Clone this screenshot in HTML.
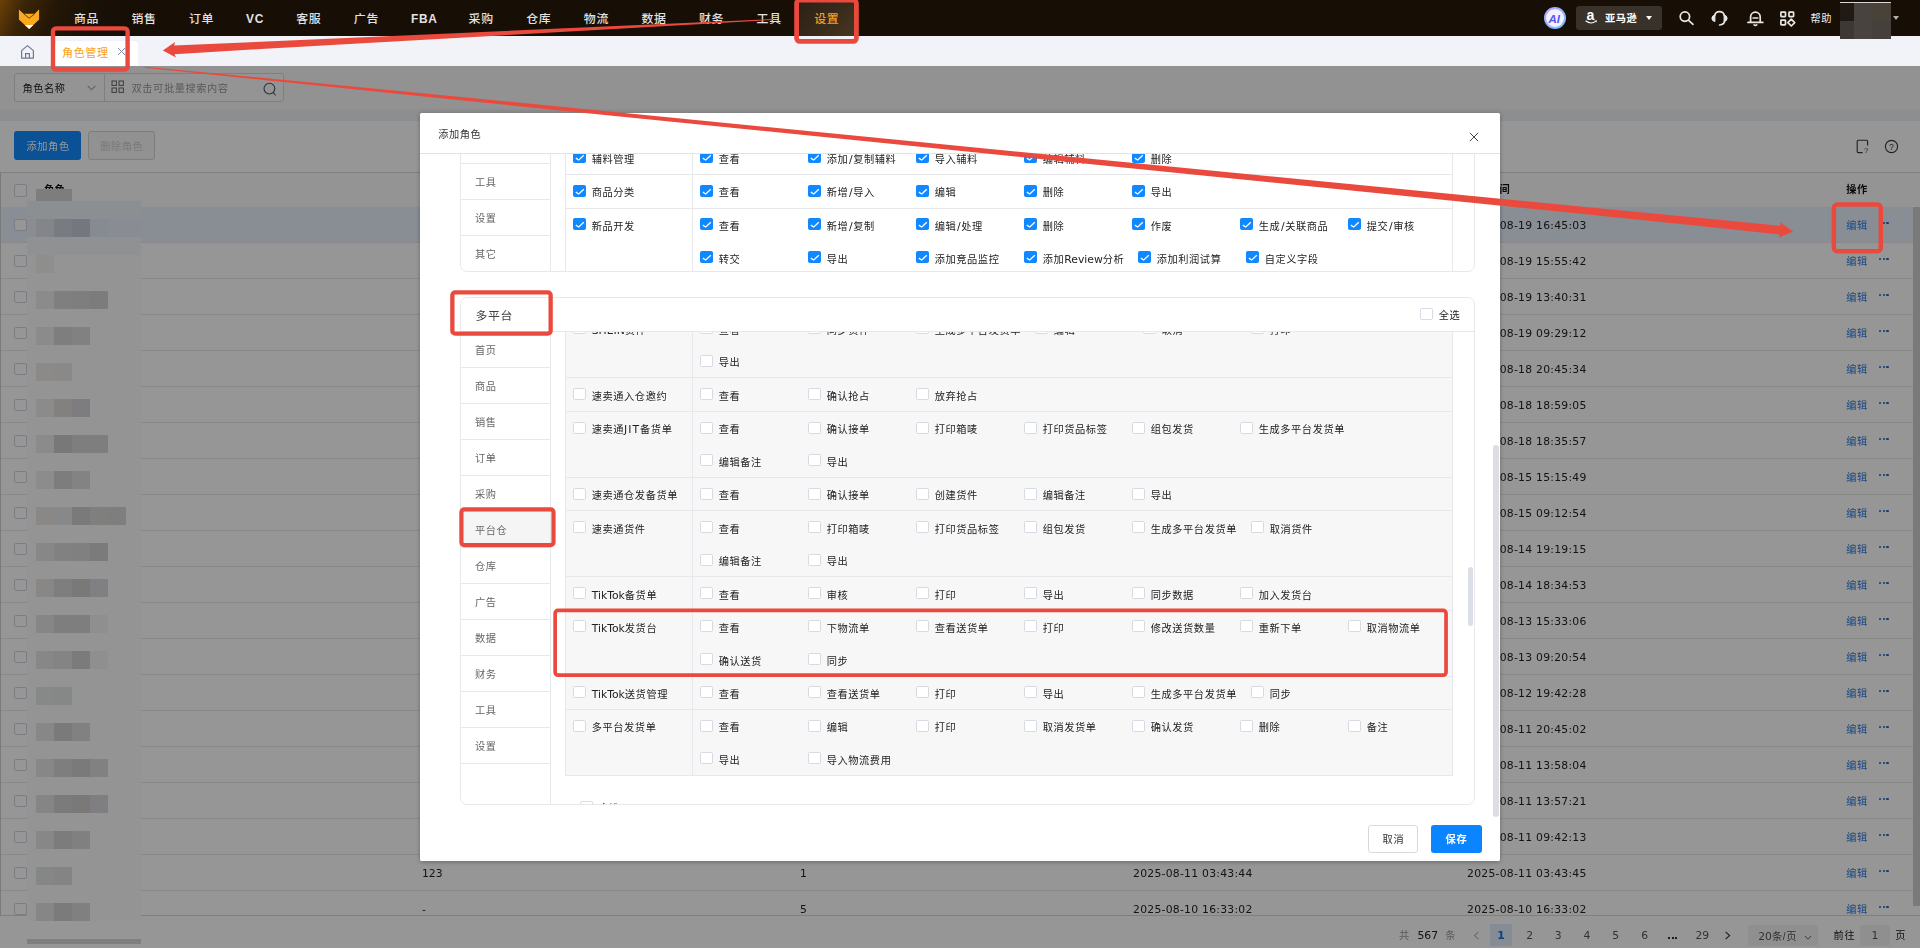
<!DOCTYPE html><html lang="zh-CN"><head><meta charset="utf-8"><title>角色管理</title><style>
*{box-sizing:border-box;margin:0;padding:0}
html,body{width:1920px;height:948px;overflow:hidden;background:#fff}
body{font-family:"Liberation Sans","Noto Sans CJK SC",sans-serif;font-size:10.8px;color:#333;position:relative}
.t{position:absolute;white-space:nowrap}
#dlg,#page,#navw{will-change:transform}
.v{font-family:"DejaVu Sans","Liberation Sans","Noto Sans CJK SC",sans-serif}
#dlg .v{font-weight:400}
.t .v{font-size:1.0582em;letter-spacing:0}
.t .sl{font-size:1.0582em;letter-spacing:0}
.tm{letter-spacing:.26px}
.abs{position:absolute}
.sl{font-family:"DejaVu Sans","Liberation Sans",sans-serif;display:inline-block;width:4.9px;text-align:center}
.cb{position:absolute;width:12.6px;height:12.4px;border:1px solid #d6dae3;border-radius:1.6px;background:#fff}
.cb.on{background:#1088ff;border-color:#1088ff}
.cb.on:after{content:"";position:absolute;left:-1px;top:-1px;width:13px;height:13px;background:#fff;clip-path:polygon(3.22px 6.54px,5.63px 8.14px,10.34px 3.71px,11.26px 4.69px,5.77px 9.86px,2.48px 7.66px)}
.gcb{position:absolute;width:12.4px;height:12.4px;border:1px solid #d2d5e2;border-radius:2px;background:#fff}
#page{position:absolute;left:0;top:66px;width:1920px;height:882px;background:#fff;overflow:hidden}
#mask{position:absolute;left:0;top:66px;width:1920px;height:882px;background:rgba(0,0,0,.412)}
#dlg{position:absolute;left:420px;top:113px;width:1080px;height:747.6px;border-radius:2px;background:#fff;box-shadow:0 1px 4px rgba(0,0,0,.3);overflow:hidden}
</style></head><body>
<div class="abs" style="left:0;top:0;width:1920px;height:36px;background:#170f06"></div>
<div class="abs" style="left:0;top:0;width:300px;height:36px;background:linear-gradient(112deg,rgba(150,90,8,.66) 0px,rgba(105,64,8,.44) 24px,rgba(72,44,8,.26) 55px,rgba(40,26,8,.12) 90px,rgba(23,15,6,0) 125px)"></div>
<div class="abs" style="left:797px;top:0;width:60px;height:36px;background:linear-gradient(135deg,#2a2015 0%,#3a2c1c 60%,#4a3720 100%)"></div>
<svg class="abs" style="left:17px;top:7px" width="24" height="24" viewBox="17 7 24 24"><path d="M18.9 9.6 L23.6 13.8 L34.8 13.8 L39.1 9.2 L39.1 19.6 L29.1 28.9 L18.9 19.6 Z" fill="#fba91f"/><path d="M23.8 13.9 L29.2 18.2 L34.6 13.9" fill="none" stroke="#3a2406" stroke-width="0.8"/><path d="M24.9 25 L33.4 25 L29.1 28.9 Z" fill="#fff"/></svg>
<span class="t" style="left:74px;top:10.10px;line-height:18px;font-size:11.91px;letter-spacing:0.69px;color:#e2e2e2;font-weight:500;">商品</span>
<span class="t" style="left:131.5px;top:10.10px;line-height:18px;font-size:11.91px;letter-spacing:0.69px;color:#e2e2e2;font-weight:500;">销售</span>
<span class="t" style="left:189px;top:10.10px;line-height:18px;font-size:11.91px;letter-spacing:0.69px;color:#e2e2e2;font-weight:500;">订单</span>
<span class="t" style="left:246px;top:10.10px;line-height:18px;font-size:11.91px;letter-spacing:0.69px;color:#e2e2e2;font-weight:700;">VC</span>
<span class="t" style="left:296.2px;top:10.10px;line-height:18px;font-size:11.91px;letter-spacing:0.69px;color:#e2e2e2;font-weight:500;">客服</span>
<span class="t" style="left:353.8px;top:10.10px;line-height:18px;font-size:11.91px;letter-spacing:0.69px;color:#e2e2e2;font-weight:500;">广告</span>
<span class="t" style="left:411px;top:10.10px;line-height:18px;font-size:11.91px;letter-spacing:0.69px;color:#e2e2e2;font-weight:700;">FBA</span>
<span class="t" style="left:468.6px;top:10.10px;line-height:18px;font-size:11.91px;letter-spacing:0.69px;color:#e2e2e2;font-weight:500;">采购</span>
<span class="t" style="left:526.2px;top:10.10px;line-height:18px;font-size:11.91px;letter-spacing:0.69px;color:#e2e2e2;font-weight:500;">仓库</span>
<span class="t" style="left:583.8px;top:10.10px;line-height:18px;font-size:11.91px;letter-spacing:0.69px;color:#e2e2e2;font-weight:500;">物流</span>
<span class="t" style="left:641.4px;top:10.10px;line-height:18px;font-size:11.91px;letter-spacing:0.69px;color:#e2e2e2;font-weight:500;">数据</span>
<span class="t" style="left:699px;top:10.10px;line-height:18px;font-size:11.91px;letter-spacing:0.69px;color:#e2e2e2;font-weight:500;">财务</span>
<span class="t" style="left:756.6px;top:10.10px;line-height:18px;font-size:11.91px;letter-spacing:0.69px;color:#e2e2e2;font-weight:500;">工具</span>
<span class="t" style="left:814.2px;top:10.10px;line-height:18px;font-size:11.91px;letter-spacing:0.69px;color:#f9a11b;font-weight:500;">设置</span>
<div class="abs" style="left:1544px;top:7px;width:22px;height:22px;border-radius:50%;background:linear-gradient(135deg,#b9a3ff,#6fc3ff);"></div>
<div class="abs" style="left:1546px;top:9px;width:18px;height:18px;border-radius:50%;background:#f4f1ff"></div>
<span class="t" style="left:1548.6px;top:11.90px;line-height:14px;font-size:11.53px;letter-spacing:0.67px;color:#5b55f0;font-weight:700;font-style:italic;letter-spacing:-0.2px">AI</span>
<div class="abs" style="left:1576px;top:6px;width:86px;height:24px;border-radius:3px;background:#39322b"></div>
<span class="t" style="left:1586.6px;top:8.20px;line-height:14px;font-size:14.17px;letter-spacing:0.83px;color:#fff;font-weight:700;">a</span>
<svg class="abs" style="left:1584.5px;top:19.6px" width="13" height="5" viewBox="0 0 13 5"><path d="M0.6 0.8 Q6 4.8 10.6 1.4" fill="none" stroke="#fff" stroke-width="1.1"/><path d="M12 0.3 L9.4 0.7 L11.4 2.6Z" fill="#fff"/></svg>
<span class="t" style="left:1605px;top:11.10px;line-height:16px;font-size:10.21px;letter-spacing:0.59px;color:#fff;font-weight:700;">亚马逊</span>
<div class="abs" style="left:1645.5px;top:16px;border:3.6px solid transparent;border-top:4.5px solid #fff;border-bottom:none"></div>
<svg class="abs" style="left:0;top:0" width="1920" height="40" viewBox="0 0 1920 40"><g fill="none" stroke="#e9e7e4" stroke-width="1.7" stroke-linecap="round" stroke-linejoin="round"><circle cx="1684.9" cy="16.6" r="4.7"/><path d="M1688.6 20.4 L1693 24.3"/><path d="M1714.6 15.6 A5 5 0 0 1 1724.4 15.6"/><path d="M1724.6 21.2 Q1724.2 24.6 1719.6 25"/><path d="M1714.9 15 L1714.9 21.6 Q1711.9 21 1711.9 18.3 Q1711.9 15.6 1714.9 15Z" fill="#e9e7e4" stroke-width="1"/><path d="M1724.1 15 L1724.1 21.6 Q1727.1 21 1727.1 18.3 Q1727.1 15.6 1724.1 15Z" fill="#e9e7e4" stroke-width="1"/><path d="M1750.6 22 L1750.6 17 A4.8 4.8 0 0 1 1760.2 17 L1760.2 22"/><path d="M1748 22.4 L1762.8 22.4"/><path d="M1753 17.9 L1757.8 17.9" stroke-width="1.5"/><path d="M1754 24.9 Q1755.4 25.9 1756.8 24.9" stroke-width="1.6"/><rect x="1780.9" y="12.1" width="4.6" height="4.6" rx="0.6"/><rect x="1789" y="12.1" width="4.6" height="4.6" rx="0.6"/><rect x="1780.9" y="20.2" width="4.6" height="4.6" rx="0.6"/><path d="M1791.3 19.2 L1794.7 22.6 L1791.3 26 L1787.9 22.6Z"/></g></svg>
<span class="t" style="left:1810.5px;top:11.10px;line-height:16px;font-size:10.21px;letter-spacing:0.59px;color:#f0f0f0;">帮助</span>
<div class="abs" style="left:0;top:36px;width:1920px;height:30px;background:#f2f3f8"></div>
<svg class="abs" style="left:20px;top:44px" width="15" height="16" viewBox="0 0 15 16"><path d="M1.6 6.6 L7.5 1.6 L13.4 6.6 L13.4 14.2 L1.6 14.2 Z" fill="none" stroke="#6d7a94" stroke-width="1.2" stroke-linejoin="round"/><path d="M5.6 14 L5.6 9.6 L9.4 9.6 L9.4 14" fill="none" stroke="#6d7a94" stroke-width="1.2"/></svg>
<div class="abs" style="left:55px;top:41px;width:83px;height:25px;background:#fff;border-radius:4px 4px 0 0"></div>
<span class="t" style="left:62px;top:45.10px;line-height:16px;font-size:11.06px;letter-spacing:0.64px;color:#f9a11b;">角色管理</span>
<svg class="abs" style="left:116.5px;top:46.5px" width="9" height="9" viewBox="0 0 9 9"><path d="M1 1 L8 8 M8 1 L1 8" stroke="#7c8aa5" stroke-width="1"/></svg>
<div id="page">
<div style="position:absolute;left:0px;top:0px;width:1920px;height:44px;background:#f9f9f9"></div>
<div style="position:absolute;left:14px;top:7px;width:90.5px;height:28.5px;border:1px solid #d9d9d9;border-radius:3px 0 0 3px;background:#fbfbfb"></div>
<div style="position:absolute;left:103.5px;top:7px;width:180px;height:28.5px;border:1px solid #d9d9d9;border-radius:0 3px 3px 0;background:#fbfbfb"></div>
<span class="t" style="left:22.4px;top:14.90px;line-height:16px;font-size:10.21px;letter-spacing:0.59px;color:#222;">角色名称</span>
<svg class="abs" style="left:86.5px;top:18.5px" width="9" height="6" viewBox="0 0 9 6"><path d="M0.8 1 L4.5 4.8 L8.2 1" fill="none" stroke="#a8a8a8" stroke-width="1.1"/></svg>
<svg class="abs" style="left:111px;top:14px" width="14" height="14" viewBox="0 0 14 14"><g fill="none" stroke="#666" stroke-width="1"><rect x="1" y="1" width="4.4" height="4.4"/><rect x="8" y="1" width="4.4" height="4.4"/><rect x="1" y="8" width="4.4" height="4.4"/><rect x="8" y="8" width="4.4" height="4.4"/></g></svg>
<span class="t" style="left:131.5px;top:14.90px;line-height:16px;font-size:10.21px;letter-spacing:0.59px;color:#9a9a9a;">双击可批量搜索内容</span>
<svg class="abs" style="left:262px;top:15px" width="16" height="16" viewBox="0 0 16 16"><circle cx="7.4" cy="7.6" r="5.4" fill="none" stroke="#4a5260" stroke-width="1.05"/><path d="M11.4 11.8 L13.4 14" stroke="#4a5260" stroke-width="1.05" stroke-linecap="round"/></svg>
<div style="position:absolute;left:0px;top:43.400000000000006px;width:1920px;height:11.2px;background:#eff1f4"></div>
<div style="position:absolute;left:0px;top:55px;width:1920px;height:830px;background:#fff"></div>
<div style="position:absolute;left:14px;top:65px;width:67px;height:29px;background:#118bff;border-radius:3px"></div>
<span class="t" style="left:26.5px;top:72.60px;line-height:16px;font-size:10.21px;letter-spacing:0.59px;color:#fff;">添加角色</span>
<div style="position:absolute;left:88.3px;top:65px;width:66.4px;height:29px;background:#f7f7f7;border:1px solid #d4d4d4;border-radius:3px"></div>
<span class="t" style="left:100.2px;top:72.60px;line-height:16px;font-size:10.21px;letter-spacing:0.59px;color:#cdcdcd;">删除角色</span>
<svg class="abs" style="left:1853px;top:72px" width="17" height="17" viewBox="0 0 17 17"><path d="M9.6 14.6 L5.2 14.6 Q4.2 14.6 4.2 13.6 L4.2 3.2 Q4.2 2.2 5.2 2.2 L13.6 2.2 Q14.6 2.2 14.6 3.2 L14.6 7.6" fill="none" stroke="#3a3a3a" stroke-width="1.15"/><text x="11" y="15.4" font-size="7.6" fill="#3a3a3a">?</text></svg>
<svg class="abs" style="left:1882.6px;top:72px" width="17" height="17" viewBox="0 0 17 17"><circle cx="8.5" cy="8.5" r="6.1" fill="none" stroke="#3a3a3a" stroke-width="1.15"/><text x="6.1" y="11.7" font-size="8.8" fill="#3a3a3a">?</text></svg>
<div style="position:absolute;left:0px;top:105.5px;width:1920px;height:1px;background:#dcdcdc"></div>
<div style="position:absolute;left:0px;top:106px;width:1px;height:745px;background:#d0d0d0"></div>
<div style="position:absolute;left:1px;top:106.5px;width:1919px;height:34px;background:#fbfbfb"></div>
<div class="gcb" style="position:absolute;left:14.2px;top:118.30000000000001px;width:12.4px;height:12.4px;"></div>
<span class="t" style="left:44px;top:115.90px;line-height:16px;font-size:10.21px;letter-spacing:0.59px;color:#111;font-weight:700;">角色</span>
<span class="t" style="left:421px;top:115.90px;line-height:16px;font-size:10.21px;letter-spacing:0.59px;color:#111;font-weight:700;">备注</span>
<span class="t" style="left:800px;top:115.90px;line-height:16px;font-size:10.21px;letter-spacing:0.59px;color:#111;font-weight:700;">用户数</span>
<span class="t" style="left:1133px;top:115.90px;line-height:16px;font-size:10.21px;letter-spacing:0.59px;color:#111;font-weight:700;">创建时间</span>
<span class="t" style="left:1467px;top:115.90px;line-height:16px;font-size:10.21px;letter-spacing:0.59px;color:#111;font-weight:700;">更新时间</span>
<span class="t" style="left:1846.3px;top:115.90px;line-height:16px;font-size:10.21px;letter-spacing:0.59px;color:#111;font-weight:700;">操作</span>
<div style="position:absolute;left:1px;top:140.6px;width:1912px;height:36px;background:#e8f1fc;border-bottom:1px solid #e9e9e9"></div>
<div class="gcb" style="position:absolute;left:14.2px;top:153.1px;width:12.4px;height:12.4px;"></div>
<span class="t v tm" style="left:1133px;top:152.20px;line-height:16px;font-size:10.8px;color:#222;">2025-08-19 16:45:03</span>
<span class="t v tm" style="left:1467px;top:152.20px;line-height:16px;font-size:10.8px;color:#222;">2025-08-19 16:45:03</span>
<span class="t" style="left:1846.3px;top:151.90px;line-height:16px;font-size:10.21px;letter-spacing:0.59px;color:#2f7fe0;">编辑</span>
<div style="position:absolute;left:1879.2px;top:156.1px;width:2.2px;height:2.2px;background:#1a66d0;border-radius:1.1px"></div>
<div style="position:absolute;left:1882.8px;top:156.1px;width:2.2px;height:2.2px;background:#1a66d0;border-radius:1.1px"></div>
<div style="position:absolute;left:1886.4px;top:156.1px;width:2.2px;height:2.2px;background:#1a66d0;border-radius:1.1px"></div>
<div style="position:absolute;left:1px;top:176.6px;width:1912px;height:36px;background:#fff;border-bottom:1px solid #e9e9e9"></div>
<div class="gcb" style="position:absolute;left:14.2px;top:189.1px;width:12.4px;height:12.4px;"></div>
<span class="t v tm" style="left:1133px;top:188.20px;line-height:16px;font-size:10.8px;color:#222;">2025-08-19 15:55:42</span>
<span class="t v tm" style="left:1467px;top:188.20px;line-height:16px;font-size:10.8px;color:#222;">2025-08-19 15:55:42</span>
<span class="t" style="left:1846.3px;top:187.90px;line-height:16px;font-size:10.21px;letter-spacing:0.59px;color:#2f7fe0;">编辑</span>
<div style="position:absolute;left:1879.2px;top:192.10000000000002px;width:2.2px;height:2.2px;background:#1a66d0;border-radius:1.1px"></div>
<div style="position:absolute;left:1882.8px;top:192.10000000000002px;width:2.2px;height:2.2px;background:#1a66d0;border-radius:1.1px"></div>
<div style="position:absolute;left:1886.4px;top:192.10000000000002px;width:2.2px;height:2.2px;background:#1a66d0;border-radius:1.1px"></div>
<div style="position:absolute;left:1px;top:212.60000000000002px;width:1912px;height:36px;background:#fff;border-bottom:1px solid #e9e9e9"></div>
<div class="gcb" style="position:absolute;left:14.2px;top:225.10000000000002px;width:12.4px;height:12.4px;"></div>
<span class="t v tm" style="left:1133px;top:224.20px;line-height:16px;font-size:10.8px;color:#222;">2025-08-19 13:40:31</span>
<span class="t v tm" style="left:1467px;top:224.20px;line-height:16px;font-size:10.8px;color:#222;">2025-08-19 13:40:31</span>
<span class="t" style="left:1846.3px;top:223.90px;line-height:16px;font-size:10.21px;letter-spacing:0.59px;color:#2f7fe0;">编辑</span>
<div style="position:absolute;left:1879.2px;top:228.10000000000002px;width:2.2px;height:2.2px;background:#1a66d0;border-radius:1.1px"></div>
<div style="position:absolute;left:1882.8px;top:228.10000000000002px;width:2.2px;height:2.2px;background:#1a66d0;border-radius:1.1px"></div>
<div style="position:absolute;left:1886.4px;top:228.10000000000002px;width:2.2px;height:2.2px;background:#1a66d0;border-radius:1.1px"></div>
<div style="position:absolute;left:1px;top:248.60000000000002px;width:1912px;height:36px;background:#fff;border-bottom:1px solid #e9e9e9"></div>
<div class="gcb" style="position:absolute;left:14.2px;top:261.1px;width:12.4px;height:12.4px;"></div>
<span class="t v tm" style="left:1133px;top:260.20px;line-height:16px;font-size:10.8px;color:#222;">2025-08-19 09:29:12</span>
<span class="t v tm" style="left:1467px;top:260.20px;line-height:16px;font-size:10.8px;color:#222;">2025-08-19 09:29:12</span>
<span class="t" style="left:1846.3px;top:259.90px;line-height:16px;font-size:10.21px;letter-spacing:0.59px;color:#2f7fe0;">编辑</span>
<div style="position:absolute;left:1879.2px;top:264.1px;width:2.2px;height:2.2px;background:#1a66d0;border-radius:1.1px"></div>
<div style="position:absolute;left:1882.8px;top:264.1px;width:2.2px;height:2.2px;background:#1a66d0;border-radius:1.1px"></div>
<div style="position:absolute;left:1886.4px;top:264.1px;width:2.2px;height:2.2px;background:#1a66d0;border-radius:1.1px"></div>
<div style="position:absolute;left:1px;top:284.6px;width:1912px;height:36px;background:#fff;border-bottom:1px solid #e9e9e9"></div>
<div class="gcb" style="position:absolute;left:14.2px;top:297.1px;width:12.4px;height:12.4px;"></div>
<span class="t v tm" style="left:1133px;top:296.20px;line-height:16px;font-size:10.8px;color:#222;">2025-08-18 20:45:34</span>
<span class="t v tm" style="left:1467px;top:296.20px;line-height:16px;font-size:10.8px;color:#222;">2025-08-18 20:45:34</span>
<span class="t" style="left:1846.3px;top:295.90px;line-height:16px;font-size:10.21px;letter-spacing:0.59px;color:#2f7fe0;">编辑</span>
<div style="position:absolute;left:1879.2px;top:300.1px;width:2.2px;height:2.2px;background:#1a66d0;border-radius:1.1px"></div>
<div style="position:absolute;left:1882.8px;top:300.1px;width:2.2px;height:2.2px;background:#1a66d0;border-radius:1.1px"></div>
<div style="position:absolute;left:1886.4px;top:300.1px;width:2.2px;height:2.2px;background:#1a66d0;border-radius:1.1px"></div>
<div style="position:absolute;left:1px;top:320.6px;width:1912px;height:36px;background:#fff;border-bottom:1px solid #e9e9e9"></div>
<div class="gcb" style="position:absolute;left:14.2px;top:333.1px;width:12.4px;height:12.4px;"></div>
<span class="t v tm" style="left:1133px;top:332.20px;line-height:16px;font-size:10.8px;color:#222;">2025-08-18 18:59:05</span>
<span class="t v tm" style="left:1467px;top:332.20px;line-height:16px;font-size:10.8px;color:#222;">2025-08-18 18:59:05</span>
<span class="t" style="left:1846.3px;top:331.90px;line-height:16px;font-size:10.21px;letter-spacing:0.59px;color:#2f7fe0;">编辑</span>
<div style="position:absolute;left:1879.2px;top:336.1px;width:2.2px;height:2.2px;background:#1a66d0;border-radius:1.1px"></div>
<div style="position:absolute;left:1882.8px;top:336.1px;width:2.2px;height:2.2px;background:#1a66d0;border-radius:1.1px"></div>
<div style="position:absolute;left:1886.4px;top:336.1px;width:2.2px;height:2.2px;background:#1a66d0;border-radius:1.1px"></div>
<div style="position:absolute;left:1px;top:356.6px;width:1912px;height:36px;background:#fff;border-bottom:1px solid #e9e9e9"></div>
<div class="gcb" style="position:absolute;left:14.2px;top:369.1px;width:12.4px;height:12.4px;"></div>
<span class="t v tm" style="left:1133px;top:368.20px;line-height:16px;font-size:10.8px;color:#222;">2025-08-18 18:35:57</span>
<span class="t v tm" style="left:1467px;top:368.20px;line-height:16px;font-size:10.8px;color:#222;">2025-08-18 18:35:57</span>
<span class="t" style="left:1846.3px;top:367.90px;line-height:16px;font-size:10.21px;letter-spacing:0.59px;color:#2f7fe0;">编辑</span>
<div style="position:absolute;left:1879.2px;top:372.1px;width:2.2px;height:2.2px;background:#1a66d0;border-radius:1.1px"></div>
<div style="position:absolute;left:1882.8px;top:372.1px;width:2.2px;height:2.2px;background:#1a66d0;border-radius:1.1px"></div>
<div style="position:absolute;left:1886.4px;top:372.1px;width:2.2px;height:2.2px;background:#1a66d0;border-radius:1.1px"></div>
<div style="position:absolute;left:1px;top:392.6px;width:1912px;height:36px;background:#fff;border-bottom:1px solid #e9e9e9"></div>
<div class="gcb" style="position:absolute;left:14.2px;top:405.1px;width:12.4px;height:12.4px;"></div>
<span class="t v tm" style="left:1133px;top:404.20px;line-height:16px;font-size:10.8px;color:#222;">2025-08-15 15:15:49</span>
<span class="t v tm" style="left:1467px;top:404.20px;line-height:16px;font-size:10.8px;color:#222;">2025-08-15 15:15:49</span>
<span class="t" style="left:1846.3px;top:403.90px;line-height:16px;font-size:10.21px;letter-spacing:0.59px;color:#2f7fe0;">编辑</span>
<div style="position:absolute;left:1879.2px;top:408.1px;width:2.2px;height:2.2px;background:#1a66d0;border-radius:1.1px"></div>
<div style="position:absolute;left:1882.8px;top:408.1px;width:2.2px;height:2.2px;background:#1a66d0;border-radius:1.1px"></div>
<div style="position:absolute;left:1886.4px;top:408.1px;width:2.2px;height:2.2px;background:#1a66d0;border-radius:1.1px"></div>
<div style="position:absolute;left:1px;top:428.6px;width:1912px;height:36px;background:#fff;border-bottom:1px solid #e9e9e9"></div>
<div class="gcb" style="position:absolute;left:14.2px;top:441.1px;width:12.4px;height:12.4px;"></div>
<span class="t v tm" style="left:1133px;top:440.20px;line-height:16px;font-size:10.8px;color:#222;">2025-08-15 09:12:54</span>
<span class="t v tm" style="left:1467px;top:440.20px;line-height:16px;font-size:10.8px;color:#222;">2025-08-15 09:12:54</span>
<span class="t" style="left:1846.3px;top:439.90px;line-height:16px;font-size:10.21px;letter-spacing:0.59px;color:#2f7fe0;">编辑</span>
<div style="position:absolute;left:1879.2px;top:444.1000000000001px;width:2.2px;height:2.2px;background:#1a66d0;border-radius:1.1px"></div>
<div style="position:absolute;left:1882.8px;top:444.1000000000001px;width:2.2px;height:2.2px;background:#1a66d0;border-radius:1.1px"></div>
<div style="position:absolute;left:1886.4px;top:444.1000000000001px;width:2.2px;height:2.2px;background:#1a66d0;border-radius:1.1px"></div>
<div style="position:absolute;left:1px;top:464.6px;width:1912px;height:36px;background:#fff;border-bottom:1px solid #e9e9e9"></div>
<div class="gcb" style="position:absolute;left:14.2px;top:477.1px;width:12.4px;height:12.4px;"></div>
<span class="t v tm" style="left:1133px;top:476.20px;line-height:16px;font-size:10.8px;color:#222;">2025-08-14 19:19:15</span>
<span class="t v tm" style="left:1467px;top:476.20px;line-height:16px;font-size:10.8px;color:#222;">2025-08-14 19:19:15</span>
<span class="t" style="left:1846.3px;top:475.90px;line-height:16px;font-size:10.21px;letter-spacing:0.59px;color:#2f7fe0;">编辑</span>
<div style="position:absolute;left:1879.2px;top:480.1px;width:2.2px;height:2.2px;background:#1a66d0;border-radius:1.1px"></div>
<div style="position:absolute;left:1882.8px;top:480.1px;width:2.2px;height:2.2px;background:#1a66d0;border-radius:1.1px"></div>
<div style="position:absolute;left:1886.4px;top:480.1px;width:2.2px;height:2.2px;background:#1a66d0;border-radius:1.1px"></div>
<div style="position:absolute;left:1px;top:500.6px;width:1912px;height:36px;background:#fff;border-bottom:1px solid #e9e9e9"></div>
<div class="gcb" style="position:absolute;left:14.2px;top:513.1px;width:12.4px;height:12.4px;"></div>
<span class="t v tm" style="left:1133px;top:512.20px;line-height:16px;font-size:10.8px;color:#222;">2025-08-14 18:34:53</span>
<span class="t v tm" style="left:1467px;top:512.20px;line-height:16px;font-size:10.8px;color:#222;">2025-08-14 18:34:53</span>
<span class="t" style="left:1846.3px;top:511.90px;line-height:16px;font-size:10.21px;letter-spacing:0.59px;color:#2f7fe0;">编辑</span>
<div style="position:absolute;left:1879.2px;top:516.1px;width:2.2px;height:2.2px;background:#1a66d0;border-radius:1.1px"></div>
<div style="position:absolute;left:1882.8px;top:516.1px;width:2.2px;height:2.2px;background:#1a66d0;border-radius:1.1px"></div>
<div style="position:absolute;left:1886.4px;top:516.1px;width:2.2px;height:2.2px;background:#1a66d0;border-radius:1.1px"></div>
<div style="position:absolute;left:1px;top:536.6px;width:1912px;height:36px;background:#fff;border-bottom:1px solid #e9e9e9"></div>
<div class="gcb" style="position:absolute;left:14.2px;top:549.1px;width:12.4px;height:12.4px;"></div>
<span class="t v tm" style="left:1133px;top:548.20px;line-height:16px;font-size:10.8px;color:#222;">2025-08-13 15:33:06</span>
<span class="t v tm" style="left:1467px;top:548.20px;line-height:16px;font-size:10.8px;color:#222;">2025-08-13 15:33:06</span>
<span class="t" style="left:1846.3px;top:547.90px;line-height:16px;font-size:10.21px;letter-spacing:0.59px;color:#2f7fe0;">编辑</span>
<div style="position:absolute;left:1879.2px;top:552.1px;width:2.2px;height:2.2px;background:#1a66d0;border-radius:1.1px"></div>
<div style="position:absolute;left:1882.8px;top:552.1px;width:2.2px;height:2.2px;background:#1a66d0;border-radius:1.1px"></div>
<div style="position:absolute;left:1886.4px;top:552.1px;width:2.2px;height:2.2px;background:#1a66d0;border-radius:1.1px"></div>
<div style="position:absolute;left:1px;top:572.6px;width:1912px;height:36px;background:#fff;border-bottom:1px solid #e9e9e9"></div>
<div class="gcb" style="position:absolute;left:14.2px;top:585.1px;width:12.4px;height:12.4px;"></div>
<span class="t v tm" style="left:1133px;top:584.20px;line-height:16px;font-size:10.8px;color:#222;">2025-08-13 09:20:54</span>
<span class="t v tm" style="left:1467px;top:584.20px;line-height:16px;font-size:10.8px;color:#222;">2025-08-13 09:20:54</span>
<span class="t" style="left:1846.3px;top:583.90px;line-height:16px;font-size:10.21px;letter-spacing:0.59px;color:#2f7fe0;">编辑</span>
<div style="position:absolute;left:1879.2px;top:588.1px;width:2.2px;height:2.2px;background:#1a66d0;border-radius:1.1px"></div>
<div style="position:absolute;left:1882.8px;top:588.1px;width:2.2px;height:2.2px;background:#1a66d0;border-radius:1.1px"></div>
<div style="position:absolute;left:1886.4px;top:588.1px;width:2.2px;height:2.2px;background:#1a66d0;border-radius:1.1px"></div>
<div style="position:absolute;left:1px;top:608.6px;width:1912px;height:36px;background:#fff;border-bottom:1px solid #e9e9e9"></div>
<div class="gcb" style="position:absolute;left:14.2px;top:621.1px;width:12.4px;height:12.4px;"></div>
<span class="t v tm" style="left:1133px;top:620.20px;line-height:16px;font-size:10.8px;color:#222;">2025-08-12 19:42:28</span>
<span class="t v tm" style="left:1467px;top:620.20px;line-height:16px;font-size:10.8px;color:#222;">2025-08-12 19:42:28</span>
<span class="t" style="left:1846.3px;top:619.90px;line-height:16px;font-size:10.21px;letter-spacing:0.59px;color:#2f7fe0;">编辑</span>
<div style="position:absolute;left:1879.2px;top:624.1px;width:2.2px;height:2.2px;background:#1a66d0;border-radius:1.1px"></div>
<div style="position:absolute;left:1882.8px;top:624.1px;width:2.2px;height:2.2px;background:#1a66d0;border-radius:1.1px"></div>
<div style="position:absolute;left:1886.4px;top:624.1px;width:2.2px;height:2.2px;background:#1a66d0;border-radius:1.1px"></div>
<div style="position:absolute;left:1px;top:644.6px;width:1912px;height:36px;background:#fff;border-bottom:1px solid #e9e9e9"></div>
<div class="gcb" style="position:absolute;left:14.2px;top:657.1px;width:12.4px;height:12.4px;"></div>
<span class="t v tm" style="left:1133px;top:656.20px;line-height:16px;font-size:10.8px;color:#222;">2025-08-11 20:45:02</span>
<span class="t v tm" style="left:1467px;top:656.20px;line-height:16px;font-size:10.8px;color:#222;">2025-08-11 20:45:02</span>
<span class="t" style="left:1846.3px;top:655.90px;line-height:16px;font-size:10.21px;letter-spacing:0.59px;color:#2f7fe0;">编辑</span>
<div style="position:absolute;left:1879.2px;top:660.1px;width:2.2px;height:2.2px;background:#1a66d0;border-radius:1.1px"></div>
<div style="position:absolute;left:1882.8px;top:660.1px;width:2.2px;height:2.2px;background:#1a66d0;border-radius:1.1px"></div>
<div style="position:absolute;left:1886.4px;top:660.1px;width:2.2px;height:2.2px;background:#1a66d0;border-radius:1.1px"></div>
<div style="position:absolute;left:1px;top:680.6px;width:1912px;height:36px;background:#fff;border-bottom:1px solid #e9e9e9"></div>
<div class="gcb" style="position:absolute;left:14.2px;top:693.1px;width:12.4px;height:12.4px;"></div>
<span class="t v tm" style="left:1133px;top:692.20px;line-height:16px;font-size:10.8px;color:#222;">2025-08-11 13:58:04</span>
<span class="t v tm" style="left:1467px;top:692.20px;line-height:16px;font-size:10.8px;color:#222;">2025-08-11 13:58:04</span>
<span class="t" style="left:1846.3px;top:691.90px;line-height:16px;font-size:10.21px;letter-spacing:0.59px;color:#2f7fe0;">编辑</span>
<div style="position:absolute;left:1879.2px;top:696.1px;width:2.2px;height:2.2px;background:#1a66d0;border-radius:1.1px"></div>
<div style="position:absolute;left:1882.8px;top:696.1px;width:2.2px;height:2.2px;background:#1a66d0;border-radius:1.1px"></div>
<div style="position:absolute;left:1886.4px;top:696.1px;width:2.2px;height:2.2px;background:#1a66d0;border-radius:1.1px"></div>
<div style="position:absolute;left:1px;top:716.6px;width:1912px;height:36px;background:#fff;border-bottom:1px solid #e9e9e9"></div>
<div class="gcb" style="position:absolute;left:14.2px;top:729.1px;width:12.4px;height:12.4px;"></div>
<span class="t v tm" style="left:1133px;top:728.20px;line-height:16px;font-size:10.8px;color:#222;">2025-08-11 13:57:21</span>
<span class="t v tm" style="left:1467px;top:728.20px;line-height:16px;font-size:10.8px;color:#222;">2025-08-11 13:57:21</span>
<span class="t" style="left:1846.3px;top:727.90px;line-height:16px;font-size:10.21px;letter-spacing:0.59px;color:#2f7fe0;">编辑</span>
<div style="position:absolute;left:1879.2px;top:732.1px;width:2.2px;height:2.2px;background:#1a66d0;border-radius:1.1px"></div>
<div style="position:absolute;left:1882.8px;top:732.1px;width:2.2px;height:2.2px;background:#1a66d0;border-radius:1.1px"></div>
<div style="position:absolute;left:1886.4px;top:732.1px;width:2.2px;height:2.2px;background:#1a66d0;border-radius:1.1px"></div>
<div style="position:absolute;left:1px;top:752.6px;width:1912px;height:36px;background:#fff;border-bottom:1px solid #e9e9e9"></div>
<div class="gcb" style="position:absolute;left:14.2px;top:765.1px;width:12.4px;height:12.4px;"></div>
<span class="t v tm" style="left:1133px;top:764.20px;line-height:16px;font-size:10.8px;color:#222;">2025-08-11 09:42:13</span>
<span class="t v tm" style="left:1467px;top:764.20px;line-height:16px;font-size:10.8px;color:#222;">2025-08-11 09:42:13</span>
<span class="t" style="left:1846.3px;top:763.90px;line-height:16px;font-size:10.21px;letter-spacing:0.59px;color:#2f7fe0;">编辑</span>
<div style="position:absolute;left:1879.2px;top:768.1px;width:2.2px;height:2.2px;background:#1a66d0;border-radius:1.1px"></div>
<div style="position:absolute;left:1882.8px;top:768.1px;width:2.2px;height:2.2px;background:#1a66d0;border-radius:1.1px"></div>
<div style="position:absolute;left:1886.4px;top:768.1px;width:2.2px;height:2.2px;background:#1a66d0;border-radius:1.1px"></div>
<div style="position:absolute;left:1px;top:788.6px;width:1912px;height:36px;background:#fff;border-bottom:1px solid #e9e9e9"></div>
<div class="gcb" style="position:absolute;left:14.2px;top:801.1px;width:12.4px;height:12.4px;"></div>
<span class="t v tm" style="left:1133px;top:800.20px;line-height:16px;font-size:10.8px;color:#222;">2025-08-11 03:43:44</span>
<span class="t v tm" style="left:1467px;top:800.20px;line-height:16px;font-size:10.8px;color:#222;">2025-08-11 03:43:45</span>
<span class="t v" style="left:422px;top:800.20px;line-height:16px;font-size:10.8px;color:#222;">123</span>
<span class="t v" style="left:800px;top:800.20px;line-height:16px;font-size:10.8px;color:#222;">1</span>
<span class="t" style="left:1846.3px;top:799.90px;line-height:16px;font-size:10.21px;letter-spacing:0.59px;color:#2f7fe0;">编辑</span>
<div style="position:absolute;left:1879.2px;top:804.1px;width:2.2px;height:2.2px;background:#1a66d0;border-radius:1.1px"></div>
<div style="position:absolute;left:1882.8px;top:804.1px;width:2.2px;height:2.2px;background:#1a66d0;border-radius:1.1px"></div>
<div style="position:absolute;left:1886.4px;top:804.1px;width:2.2px;height:2.2px;background:#1a66d0;border-radius:1.1px"></div>
<div style="position:absolute;left:1px;top:824.6px;width:1912px;height:36px;background:#fff;border-bottom:1px solid #e9e9e9"></div>
<div class="gcb" style="position:absolute;left:14.2px;top:837.1px;width:12.4px;height:12.4px;"></div>
<span class="t v tm" style="left:1133px;top:836.20px;line-height:16px;font-size:10.8px;color:#222;">2025-08-10 16:33:02</span>
<span class="t v tm" style="left:1467px;top:836.20px;line-height:16px;font-size:10.8px;color:#222;">2025-08-10 16:33:02</span>
<span class="t v" style="left:422px;top:836.20px;line-height:16px;font-size:10.8px;color:#222;">-</span>
<span class="t v" style="left:800px;top:836.20px;line-height:16px;font-size:10.8px;color:#222;">5</span>
<span class="t" style="left:1846.3px;top:835.90px;line-height:16px;font-size:10.21px;letter-spacing:0.59px;color:#2f7fe0;">编辑</span>
<div style="position:absolute;left:1879.2px;top:840.1px;width:2.2px;height:2.2px;background:#1a66d0;border-radius:1.1px"></div>
<div style="position:absolute;left:1882.8px;top:840.1px;width:2.2px;height:2.2px;background:#1a66d0;border-radius:1.1px"></div>
<div style="position:absolute;left:1886.4px;top:840.1px;width:2.2px;height:2.2px;background:#1a66d0;border-radius:1.1px"></div>
<div style="position:absolute;left:1913px;top:141px;width:7px;height:699px;background:#cfcfcf"></div>
<div style="position:absolute;left:0px;top:848.7px;width:1920px;height:34px;background:#fff;border-top:1px solid #d8d8d8"></div>
<div style="position:absolute;left:27px;top:873.2px;width:114px;height:4.4px;background:#d9d9d9"></div>
<span class="t" style="left:1399px;top:862.10px;line-height:16px;font-size:10.21px;letter-spacing:0.59px;color:#9a9a9a;">共</span>
<span class="t v" style="left:1417.4px;top:861.50px;line-height:16px;font-size:10.8px;color:#222;">567</span>
<span class="t" style="left:1445.2px;top:862.10px;line-height:16px;font-size:10.21px;letter-spacing:0.59px;color:#9a9a9a;">条</span>
<svg class="abs" style="left:1472.5px;top:865.0px" width="7" height="9" viewBox="0 0 7 9"><path d="M5.4 0.8 L1.4 4.5 L5.4 8.2" fill="none" stroke="#b4b8c0" stroke-width="1.1"/></svg>
<div style="position:absolute;left:1490px;top:858.2px;width:22px;height:21.6px;background:#e4effd"></div>
<span class="t v" style="left:1497.3px;top:861.50px;line-height:16px;font-size:10.8px;color:#1a6fd6;font-weight:700;">1</span>
<span class="t v" style="left:1526.1499999999999px;top:861.50px;line-height:16px;font-size:10.8px;color:#555;">2</span>
<span class="t v" style="left:1554.85px;top:861.50px;line-height:16px;font-size:10.8px;color:#555;">3</span>
<span class="t v" style="left:1583.55px;top:861.50px;line-height:16px;font-size:10.8px;color:#555;">4</span>
<span class="t v" style="left:1612.35px;top:861.50px;line-height:16px;font-size:10.8px;color:#555;">5</span>
<span class="t v" style="left:1641.1499999999999px;top:861.50px;line-height:16px;font-size:10.8px;color:#555;">6</span>
<span class="t v" style="left:1695.3999999999999px;top:861.50px;line-height:16px;font-size:10.8px;color:#555;">29</span>
<div style="position:absolute;left:1668.3px;top:871.1px;width:2.1px;height:2.1px;background:#222;border-radius:.5px"></div>
<div style="position:absolute;left:1671.85px;top:871.1px;width:2.1px;height:2.1px;background:#222;border-radius:.5px"></div>
<div style="position:absolute;left:1675.3999999999999px;top:871.1px;width:2.1px;height:2.1px;background:#222;border-radius:.5px"></div>
<svg class="abs" style="left:1723.5px;top:865.0px" width="7" height="9" viewBox="0 0 7 9"><path d="M1.6 0.8 L5.6 4.5 L1.6 8.2" fill="none" stroke="#333" stroke-width="1.1"/></svg>
<div style="position:absolute;left:1747.8px;top:858.8px;width:70px;height:21.6px;background:#f4f4f4;border-radius:3px"></div>
<span class="t" style="left:1758.2px;top:863.30px;line-height:16px;font-size:10.21px;letter-spacing:0.59px;color:#555;"><span class="v">20</span>条/页</span>
<svg class="abs" style="left:1804px;top:868.5px" width="8" height="6" viewBox="0 0 8 6"><path d="M1 1 L4 4.2 L7 1" fill="none" stroke="#666" stroke-width="1"/></svg>
<span class="t" style="left:1833.6px;top:862.10px;line-height:16px;font-size:10.21px;letter-spacing:0.59px;color:#222;">前往</span>
<div style="position:absolute;left:1859.5px;top:858.8px;width:30px;height:21.6px;background:#f4f4f4;border-radius:3px"></div>
<span class="t v" style="left:1871.6px;top:861.50px;line-height:16px;font-size:10.8px;color:#555;">1</span>
<span class="t" style="left:1895.2px;top:862.10px;line-height:16px;font-size:10.21px;letter-spacing:0.59px;color:#222;">页</span>
<div style="position:absolute;left:36px;top:123px;width:36px;height:12px;background:#d4d4d4"></div>
<div style="position:absolute;left:27px;top:135px;width:114px;height:720px;background:#fbfbfb"></div>
<div style="position:absolute;left:27px;top:135px;width:114px;height:18px;background:#eff3f9"></div>
<div style="position:absolute;left:27px;top:153px;width:114px;height:18px;background:#e9f0fa"></div>
<div style="position:absolute;left:27px;top:171px;width:114px;height:18px;background:#f3f6fa"></div>
<div style="position:absolute;left:36px;top:153px;width:18px;height:18px;background:#dfe3ea"></div>
<div style="position:absolute;left:54px;top:153px;width:18px;height:18px;background:#ccd2dc"></div>
<div style="position:absolute;left:72px;top:153px;width:18px;height:18px;background:#c6cbd4"></div>
<div style="position:absolute;left:90px;top:153px;width:18px;height:18px;background:#e4eaf6"></div>
<div style="position:absolute;left:36px;top:189px;width:18px;height:18px;background:#f2f1ee"></div>
<div style="position:absolute;left:36px;top:225px;width:18px;height:18px;background:#ececec"></div>
<div style="position:absolute;left:54px;top:225px;width:18px;height:18px;background:#d9d9d9"></div>
<div style="position:absolute;left:72px;top:225px;width:18px;height:18px;background:#d7d7d7"></div>
<div style="position:absolute;left:90px;top:225px;width:18px;height:18px;background:#d3d3d3"></div>
<div style="position:absolute;left:36px;top:261px;width:18px;height:18px;background:#ededed"></div>
<div style="position:absolute;left:54px;top:261px;width:18px;height:18px;background:#d6d6d6"></div>
<div style="position:absolute;left:72px;top:261px;width:18px;height:18px;background:#dcdcdc"></div>
<div style="position:absolute;left:36px;top:297px;width:18px;height:18px;background:#eceae7"></div>
<div style="position:absolute;left:54px;top:297px;width:18px;height:18px;background:#ebe9e6"></div>
<div style="position:absolute;left:36px;top:333px;width:18px;height:18px;background:#ececec"></div>
<div style="position:absolute;left:54px;top:333px;width:18px;height:18px;background:#dedcd9"></div>
<div style="position:absolute;left:72px;top:333px;width:18px;height:18px;background:#d4d4d8"></div>
<div style="position:absolute;left:36px;top:369px;width:18px;height:18px;background:#ececec"></div>
<div style="position:absolute;left:54px;top:369px;width:18px;height:18px;background:#cfcdca"></div>
<div style="position:absolute;left:72px;top:369px;width:18px;height:18px;background:#d6d6d6"></div>
<div style="position:absolute;left:90px;top:369px;width:18px;height:18px;background:#d6d6d6"></div>
<div style="position:absolute;left:36px;top:405px;width:18px;height:18px;background:#eeeeee"></div>
<div style="position:absolute;left:54px;top:405px;width:18px;height:18px;background:#d4d4d4"></div>
<div style="position:absolute;left:72px;top:405px;width:18px;height:18px;background:#dddfdf"></div>
<div style="position:absolute;left:36px;top:441px;width:18px;height:18px;background:#ebe8e6"></div>
<div style="position:absolute;left:54px;top:441px;width:18px;height:18px;background:#e6e7ea"></div>
<div style="position:absolute;left:72px;top:441px;width:18px;height:18px;background:#d0d0d0"></div>
<div style="position:absolute;left:90px;top:441px;width:18px;height:18px;background:#d9d8d5"></div>
<div style="position:absolute;left:108px;top:441px;width:18px;height:18px;background:#d6d6d6"></div>
<div style="position:absolute;left:36px;top:477px;width:18px;height:18px;background:#e6e6e6"></div>
<div style="position:absolute;left:54px;top:477px;width:18px;height:18px;background:#dcdcdc"></div>
<div style="position:absolute;left:72px;top:477px;width:18px;height:18px;background:#dadada"></div>
<div style="position:absolute;left:90px;top:477px;width:18px;height:18px;background:#d2d2d2"></div>
<div style="position:absolute;left:36px;top:513px;width:18px;height:18px;background:#e8e6e3"></div>
<div style="position:absolute;left:54px;top:513px;width:18px;height:18px;background:#d7d7d7"></div>
<div style="position:absolute;left:72px;top:513px;width:18px;height:18px;background:#d0cecb"></div>
<div style="position:absolute;left:90px;top:513px;width:18px;height:18px;background:#dadadd"></div>
<div style="position:absolute;left:36px;top:549px;width:18px;height:18px;background:#e4e4e4"></div>
<div style="position:absolute;left:54px;top:549px;width:18px;height:18px;background:#d7d7d7"></div>
<div style="position:absolute;left:72px;top:549px;width:18px;height:18px;background:#d7d7d7"></div>
<div style="position:absolute;left:90px;top:549px;width:18px;height:18px;background:#f3f3f3"></div>
<div style="position:absolute;left:36px;top:585px;width:18px;height:18px;background:#e6e6e6"></div>
<div style="position:absolute;left:54px;top:585px;width:18px;height:18px;background:#e0e0e0"></div>
<div style="position:absolute;left:72px;top:585px;width:18px;height:18px;background:#d2d2d2"></div>
<div style="position:absolute;left:90px;top:585px;width:18px;height:18px;background:#f3f3f3"></div>
<div style="position:absolute;left:36px;top:621px;width:18px;height:18px;background:#e6e8e8"></div>
<div style="position:absolute;left:54px;top:621px;width:18px;height:18px;background:#e4e6e6"></div>
<div style="position:absolute;left:36px;top:657px;width:18px;height:18px;background:#e6e6e6"></div>
<div style="position:absolute;left:54px;top:657px;width:18px;height:18px;background:#d0d0d0"></div>
<div style="position:absolute;left:72px;top:657px;width:18px;height:18px;background:#d9dbde"></div>
<div style="position:absolute;left:36px;top:693px;width:18px;height:18px;background:#e6e6e6"></div>
<div style="position:absolute;left:54px;top:693px;width:18px;height:18px;background:#d6d6d6"></div>
<div style="position:absolute;left:72px;top:693px;width:18px;height:18px;background:#d1cfcc"></div>
<div style="position:absolute;left:90px;top:693px;width:18px;height:18px;background:#dcdcdf"></div>
<div style="position:absolute;left:36px;top:729px;width:18px;height:18px;background:#e2e2e2"></div>
<div style="position:absolute;left:54px;top:729px;width:18px;height:18px;background:#d2d2d2"></div>
<div style="position:absolute;left:72px;top:729px;width:18px;height:18px;background:#d0cecb"></div>
<div style="position:absolute;left:90px;top:729px;width:18px;height:18px;background:#d8d8db"></div>
<div style="position:absolute;left:36px;top:765px;width:18px;height:18px;background:#e6e6e6"></div>
<div style="position:absolute;left:54px;top:765px;width:18px;height:18px;background:#d3d3d3"></div>
<div style="position:absolute;left:72px;top:765px;width:18px;height:18px;background:#dadada"></div>
<div style="position:absolute;left:36px;top:801px;width:18px;height:18px;background:#e2e4e4"></div>
<div style="position:absolute;left:54px;top:801px;width:18px;height:18px;background:#e0e0e0"></div>
<div style="position:absolute;left:36px;top:837px;width:18px;height:18px;background:#e4e4e4"></div>
<div style="position:absolute;left:54px;top:837px;width:18px;height:18px;background:#d2d2d2"></div>
<div style="position:absolute;left:72px;top:837px;width:18px;height:18px;background:#dadada"></div>
</div>
<div id="mask"></div>
<div id="dlg">
<div style="position:absolute;left:40.2px;top:7px;width:1014.4px;height:152.4px;border:1px solid #e6e8ec;border-radius:0 0 7px 7px;background:#fff"></div>
<div style="position:absolute;left:129.9px;top:7px;width:1px;height:152px;background:#e6e8ec"></div>
<div style="position:absolute;left:41px;top:50.0px;width:89px;height:1px;background:#e6e8ec"></div>
<div style="position:absolute;left:41px;top:85.9px;width:89px;height:1px;background:#e6e8ec"></div>
<div style="position:absolute;left:41px;top:121.8px;width:89px;height:1px;background:#e6e8ec"></div>
<span class="t" style="left:55px;top:62.30px;line-height:16px;font-size:10.21px;letter-spacing:0.59px;color:#666;">工具</span>
<span class="t" style="left:55px;top:98.10px;line-height:16px;font-size:10.21px;letter-spacing:0.59px;color:#666;">设置</span>
<span class="t" style="left:55px;top:134.20px;line-height:16px;font-size:10.21px;letter-spacing:0.59px;color:#666;">其它</span>
<div style="position:absolute;left:145px;top:7px;width:888px;height:152px;border-left:1px solid #e6e8ec;border-right:1px solid #e6e8ec;"></div>
<div style="position:absolute;left:272px;top:7px;width:1px;height:152px;background:#e6e8ec"></div>
<div style="position:absolute;left:146px;top:61.0px;width:886px;height:1px;background:#e6e8ec"></div>
<div style="position:absolute;left:146px;top:95.0px;width:886px;height:1px;background:#e6e8ec"></div>
<i class="cb on" style="left:153px;top:38px"></i>
<span class="t" style="left:171.7px;top:39.05px;line-height:16px;font-size:10.21px;letter-spacing:0.59px;color:#222;">辅料管理</span>
<i class="cb on" style="left:280px;top:38px"></i>
<span class="t" style="left:298.7px;top:39.05px;line-height:16px;font-size:10.21px;letter-spacing:0.59px;color:#222;">查看</span>
<i class="cb on" style="left:388px;top:38px"></i>
<span class="t" style="left:406.7px;top:39.05px;line-height:16px;font-size:10.21px;letter-spacing:0.59px;color:#222;">添加<span class="sl">/</span>复制辅料</span>
<i class="cb on" style="left:496px;top:38px"></i>
<span class="t" style="left:514.7px;top:39.05px;line-height:16px;font-size:10.21px;letter-spacing:0.59px;color:#222;">导入辅料</span>
<i class="cb on" style="left:604px;top:38px"></i>
<span class="t" style="left:622.7px;top:39.05px;line-height:16px;font-size:10.21px;letter-spacing:0.59px;color:#222;">编辑辅料</span>
<i class="cb on" style="left:712px;top:38px"></i>
<span class="t" style="left:730.7px;top:39.05px;line-height:16px;font-size:10.21px;letter-spacing:0.59px;color:#222;">删除</span>
<i class="cb on" style="left:153px;top:72px"></i>
<span class="t" style="left:171.7px;top:72.05px;line-height:16px;font-size:10.21px;letter-spacing:0.59px;color:#222;">商品分类</span>
<i class="cb on" style="left:280px;top:72px"></i>
<span class="t" style="left:298.7px;top:72.05px;line-height:16px;font-size:10.21px;letter-spacing:0.59px;color:#222;">查看</span>
<i class="cb on" style="left:388px;top:72px"></i>
<span class="t" style="left:406.7px;top:72.05px;line-height:16px;font-size:10.21px;letter-spacing:0.59px;color:#222;">新增<span class="sl">/</span>导入</span>
<i class="cb on" style="left:496px;top:72px"></i>
<span class="t" style="left:514.7px;top:72.05px;line-height:16px;font-size:10.21px;letter-spacing:0.59px;color:#222;">编辑</span>
<i class="cb on" style="left:604px;top:72px"></i>
<span class="t" style="left:622.7px;top:72.05px;line-height:16px;font-size:10.21px;letter-spacing:0.59px;color:#222;">删除</span>
<i class="cb on" style="left:712px;top:72px"></i>
<span class="t" style="left:730.7px;top:72.05px;line-height:16px;font-size:10.21px;letter-spacing:0.59px;color:#222;">导出</span>
<i class="cb on" style="left:153px;top:105px"></i>
<span class="t" style="left:171.7px;top:106.05px;line-height:16px;font-size:10.21px;letter-spacing:0.59px;color:#222;">新品开发</span>
<i class="cb on" style="left:280px;top:105px"></i>
<span class="t" style="left:298.7px;top:106.05px;line-height:16px;font-size:10.21px;letter-spacing:0.59px;color:#222;">查看</span>
<i class="cb on" style="left:388px;top:105px"></i>
<span class="t" style="left:406.7px;top:106.05px;line-height:16px;font-size:10.21px;letter-spacing:0.59px;color:#222;">新增<span class="sl">/</span>复制</span>
<i class="cb on" style="left:496px;top:105px"></i>
<span class="t" style="left:514.7px;top:106.05px;line-height:16px;font-size:10.21px;letter-spacing:0.59px;color:#222;">编辑<span class="sl">/</span>处理</span>
<i class="cb on" style="left:604px;top:105px"></i>
<span class="t" style="left:622.7px;top:106.05px;line-height:16px;font-size:10.21px;letter-spacing:0.59px;color:#222;">删除</span>
<i class="cb on" style="left:712px;top:105px"></i>
<span class="t" style="left:730.7px;top:106.05px;line-height:16px;font-size:10.21px;letter-spacing:0.59px;color:#222;">作废</span>
<i class="cb on" style="left:820px;top:105px"></i>
<span class="t" style="left:838.7px;top:106.05px;line-height:16px;font-size:10.21px;letter-spacing:0.59px;color:#222;">生成<span class="sl">/</span>关联商品</span>
<i class="cb on" style="left:928px;top:105px"></i>
<span class="t" style="left:946.7px;top:106.05px;line-height:16px;font-size:10.21px;letter-spacing:0.59px;color:#222;">提交<span class="sl">/</span>审核</span>
<i class="cb on" style="left:280px;top:138px"></i>
<span class="t" style="left:298.7px;top:139.05px;line-height:16px;font-size:10.21px;letter-spacing:0.59px;color:#222;">转交</span>
<i class="cb on" style="left:388px;top:138px"></i>
<span class="t" style="left:406.7px;top:139.05px;line-height:16px;font-size:10.21px;letter-spacing:0.59px;color:#222;">导出</span>
<i class="cb on" style="left:496px;top:138px"></i>
<span class="t" style="left:514.7px;top:139.05px;line-height:16px;font-size:10.21px;letter-spacing:0.59px;color:#222;">添加竞品监控</span>
<i class="cb on" style="left:604px;top:138px"></i>
<span class="t" style="left:622.7px;top:139.05px;line-height:16px;font-size:10.21px;letter-spacing:0.59px;color:#222;">添加<span class="v">Review</span>分析</span>
<i class="cb on" style="left:718px;top:138px"></i>
<span class="t" style="left:736.7px;top:139.05px;line-height:16px;font-size:10.21px;letter-spacing:0.59px;color:#222;">添加利润试算</span>
<i class="cb on" style="left:826px;top:138px"></i>
<span class="t" style="left:844.7px;top:139.05px;line-height:16px;font-size:10.21px;letter-spacing:0.59px;color:#222;">自定义字段</span>
<div style="position:absolute;left:40.2px;top:183.9px;width:1014.4px;height:507.7px;border:1px solid #e6e8ec;border-radius:7px;background:#fff"></div>
<div class="abs" style="left:41px;top:219px;width:1012.6px;height:472px;overflow:hidden">
<div style="position:absolute;left:88.9px;top:-1px;width:1px;height:474px;background:#e6e8ec"></div>
<div style="position:absolute;left:0px;top:34.9px;width:89px;height:1px;background:#e6e8ec"></div>
<span class="t" style="left:14px;top:11.10px;line-height:16px;font-size:10.21px;letter-spacing:0.59px;color:#666;">首页</span>
<div style="position:absolute;left:0px;top:70.9px;width:89px;height:1px;background:#e6e8ec"></div>
<span class="t" style="left:14px;top:47.10px;line-height:16px;font-size:10.21px;letter-spacing:0.59px;color:#666;">商品</span>
<div style="position:absolute;left:0px;top:106.9px;width:89px;height:1px;background:#e6e8ec"></div>
<span class="t" style="left:14px;top:83.10px;line-height:16px;font-size:10.21px;letter-spacing:0.59px;color:#666;">销售</span>
<div style="position:absolute;left:0px;top:142.9px;width:89px;height:1px;background:#e6e8ec"></div>
<span class="t" style="left:14px;top:119.10px;line-height:16px;font-size:10.21px;letter-spacing:0.59px;color:#666;">订单</span>
<div style="position:absolute;left:0px;top:178.9px;width:89px;height:1px;background:#e6e8ec"></div>
<span class="t" style="left:14px;top:155.10px;line-height:16px;font-size:10.21px;letter-spacing:0.59px;color:#666;">采购</span>
<div style="position:absolute;left:0px;top:179.9px;width:89px;height:35.5px;background:#f5f5f5"></div>
<div style="position:absolute;left:0px;top:214.9px;width:89px;height:1px;background:#e6e8ec"></div>
<span class="t" style="left:14px;top:191.10px;line-height:16px;font-size:10.21px;letter-spacing:0.59px;color:#666;">平台仓</span>
<div style="position:absolute;left:0px;top:250.9px;width:89px;height:1px;background:#e6e8ec"></div>
<span class="t" style="left:14px;top:227.10px;line-height:16px;font-size:10.21px;letter-spacing:0.59px;color:#666;">仓库</span>
<div style="position:absolute;left:0px;top:286.9px;width:89px;height:1px;background:#e6e8ec"></div>
<span class="t" style="left:14px;top:263.10px;line-height:16px;font-size:10.21px;letter-spacing:0.59px;color:#666;">广告</span>
<div style="position:absolute;left:0px;top:322.9px;width:89px;height:1px;background:#e6e8ec"></div>
<span class="t" style="left:14px;top:299.10px;line-height:16px;font-size:10.21px;letter-spacing:0.59px;color:#666;">数据</span>
<div style="position:absolute;left:0px;top:358.9px;width:89px;height:1px;background:#e6e8ec"></div>
<span class="t" style="left:14px;top:335.10px;line-height:16px;font-size:10.21px;letter-spacing:0.59px;color:#666;">财务</span>
<div style="position:absolute;left:0px;top:394.9px;width:89px;height:1px;background:#e6e8ec"></div>
<span class="t" style="left:14px;top:371.10px;line-height:16px;font-size:10.21px;letter-spacing:0.59px;color:#666;">工具</span>
<div style="position:absolute;left:0px;top:430.9px;width:89px;height:1px;background:#e6e8ec"></div>
<span class="t" style="left:14px;top:407.10px;line-height:16px;font-size:10.21px;letter-spacing:0.59px;color:#666;">设置</span>
<div style="position:absolute;left:104px;top:-32px;width:888px;height:476px;background:#f7f7f7;border:1px solid #e6e8ec"></div>
<div style="position:absolute;left:231px;top:-32px;width:1px;height:475px;background:#e6e8ec"></div>
<div style="position:absolute;left:105px;top:45.0px;width:886px;height:1px;background:#e6e8ec"></div>
<div style="position:absolute;left:105px;top:79.0px;width:886px;height:1px;background:#e6e8ec"></div>
<div style="position:absolute;left:105px;top:145.0px;width:886px;height:1px;background:#e6e8ec"></div>
<div style="position:absolute;left:105px;top:178.0px;width:886px;height:1px;background:#e6e8ec"></div>
<div style="position:absolute;left:105px;top:244.0px;width:886px;height:1px;background:#e6e8ec"></div>
<div style="position:absolute;left:105px;top:278.0px;width:886px;height:1px;background:#e6e8ec"></div>
<div style="position:absolute;left:105px;top:344.0px;width:886px;height:1px;background:#e6e8ec"></div>
<div style="position:absolute;left:105px;top:377.0px;width:886px;height:1px;background:#e6e8ec"></div>
<i class="cb" style="left:112px;top:-10px"></i>
<span class="t" style="left:130.7px;top:-8.95px;line-height:16px;font-size:10.21px;letter-spacing:0.59px;color:#222;"><span class="v">SHEIN</span>货件</span>
<i class="cb" style="left:239px;top:-10px"></i>
<span class="t" style="left:257.7px;top:-8.95px;line-height:16px;font-size:10.21px;letter-spacing:0.59px;color:#222;">查看</span>
<i class="cb" style="left:347px;top:-10px"></i>
<span class="t" style="left:365.7px;top:-8.95px;line-height:16px;font-size:10.21px;letter-spacing:0.59px;color:#222;">同步货件</span>
<i class="cb" style="left:455px;top:-10px"></i>
<span class="t" style="left:473.7px;top:-8.95px;line-height:16px;font-size:10.21px;letter-spacing:0.59px;color:#222;">生成多平台发货单</span>
<i class="cb" style="left:574px;top:-10px"></i>
<span class="t" style="left:592.7px;top:-8.95px;line-height:16px;font-size:10.21px;letter-spacing:0.59px;color:#222;">编辑</span>
<i class="cb" style="left:682px;top:-10px"></i>
<span class="t" style="left:700.7px;top:-8.95px;line-height:16px;font-size:10.21px;letter-spacing:0.59px;color:#222;">取消</span>
<i class="cb" style="left:790px;top:-10px"></i>
<span class="t" style="left:808.7px;top:-8.95px;line-height:16px;font-size:10.21px;letter-spacing:0.59px;color:#222;">打印</span>
<i class="cb" style="left:239px;top:23px"></i>
<span class="t" style="left:257.7px;top:23.05px;line-height:16px;font-size:10.21px;letter-spacing:0.59px;color:#222;">导出</span>
<i class="cb" style="left:112px;top:56px"></i>
<span class="t" style="left:130.7px;top:57.05px;line-height:16px;font-size:10.21px;letter-spacing:0.59px;color:#222;">速卖通入仓邀约</span>
<i class="cb" style="left:239px;top:56px"></i>
<span class="t" style="left:257.7px;top:57.05px;line-height:16px;font-size:10.21px;letter-spacing:0.59px;color:#222;">查看</span>
<i class="cb" style="left:347px;top:56px"></i>
<span class="t" style="left:365.7px;top:57.05px;line-height:16px;font-size:10.21px;letter-spacing:0.59px;color:#222;">确认抢占</span>
<i class="cb" style="left:455px;top:56px"></i>
<span class="t" style="left:473.7px;top:57.05px;line-height:16px;font-size:10.21px;letter-spacing:0.59px;color:#222;">放弃抢占</span>
<i class="cb" style="left:112px;top:90px"></i>
<span class="t" style="left:130.7px;top:90.05px;line-height:16px;font-size:10.21px;letter-spacing:0.59px;color:#222;">速卖通<span class="v" style="letter-spacing:1px">JIT</span>备货单</span>
<i class="cb" style="left:239px;top:90px"></i>
<span class="t" style="left:257.7px;top:90.05px;line-height:16px;font-size:10.21px;letter-spacing:0.59px;color:#222;">查看</span>
<i class="cb" style="left:347px;top:90px"></i>
<span class="t" style="left:365.7px;top:90.05px;line-height:16px;font-size:10.21px;letter-spacing:0.59px;color:#222;">确认接单</span>
<i class="cb" style="left:455px;top:90px"></i>
<span class="t" style="left:473.7px;top:90.05px;line-height:16px;font-size:10.21px;letter-spacing:0.59px;color:#222;">打印箱唛</span>
<i class="cb" style="left:563px;top:90px"></i>
<span class="t" style="left:581.7px;top:90.05px;line-height:16px;font-size:10.21px;letter-spacing:0.59px;color:#222;">打印货品标签</span>
<i class="cb" style="left:671px;top:90px"></i>
<span class="t" style="left:689.7px;top:90.05px;line-height:16px;font-size:10.21px;letter-spacing:0.59px;color:#222;">组包发货</span>
<i class="cb" style="left:779px;top:90px"></i>
<span class="t" style="left:797.7px;top:90.05px;line-height:16px;font-size:10.21px;letter-spacing:0.59px;color:#222;">生成多平台发货单</span>
<i class="cb" style="left:239px;top:122px"></i>
<span class="t" style="left:257.7px;top:123.05px;line-height:16px;font-size:10.21px;letter-spacing:0.59px;color:#222;">编辑备注</span>
<i class="cb" style="left:347px;top:122px"></i>
<span class="t" style="left:365.7px;top:123.05px;line-height:16px;font-size:10.21px;letter-spacing:0.59px;color:#222;">导出</span>
<i class="cb" style="left:112px;top:156px"></i>
<span class="t" style="left:130.7px;top:156.05px;line-height:16px;font-size:10.21px;letter-spacing:0.59px;color:#222;">速卖通仓发备货单</span>
<i class="cb" style="left:239px;top:156px"></i>
<span class="t" style="left:257.7px;top:156.05px;line-height:16px;font-size:10.21px;letter-spacing:0.59px;color:#222;">查看</span>
<i class="cb" style="left:347px;top:156px"></i>
<span class="t" style="left:365.7px;top:156.05px;line-height:16px;font-size:10.21px;letter-spacing:0.59px;color:#222;">确认接单</span>
<i class="cb" style="left:455px;top:156px"></i>
<span class="t" style="left:473.7px;top:156.05px;line-height:16px;font-size:10.21px;letter-spacing:0.59px;color:#222;">创建货件</span>
<i class="cb" style="left:563px;top:156px"></i>
<span class="t" style="left:581.7px;top:156.05px;line-height:16px;font-size:10.21px;letter-spacing:0.59px;color:#222;">编辑备注</span>
<i class="cb" style="left:671px;top:156px"></i>
<span class="t" style="left:689.7px;top:156.05px;line-height:16px;font-size:10.21px;letter-spacing:0.59px;color:#222;">导出</span>
<i class="cb" style="left:112px;top:189px"></i>
<span class="t" style="left:130.7px;top:190.05px;line-height:16px;font-size:10.21px;letter-spacing:0.59px;color:#222;">速卖通货件</span>
<i class="cb" style="left:239px;top:189px"></i>
<span class="t" style="left:257.7px;top:190.05px;line-height:16px;font-size:10.21px;letter-spacing:0.59px;color:#222;">查看</span>
<i class="cb" style="left:347px;top:189px"></i>
<span class="t" style="left:365.7px;top:190.05px;line-height:16px;font-size:10.21px;letter-spacing:0.59px;color:#222;">打印箱唛</span>
<i class="cb" style="left:455px;top:189px"></i>
<span class="t" style="left:473.7px;top:190.05px;line-height:16px;font-size:10.21px;letter-spacing:0.59px;color:#222;">打印货品标签</span>
<i class="cb" style="left:563px;top:189px"></i>
<span class="t" style="left:581.7px;top:190.05px;line-height:16px;font-size:10.21px;letter-spacing:0.59px;color:#222;">组包发货</span>
<i class="cb" style="left:671px;top:189px"></i>
<span class="t" style="left:689.7px;top:190.05px;line-height:16px;font-size:10.21px;letter-spacing:0.59px;color:#222;">生成多平台发货单</span>
<i class="cb" style="left:790px;top:189px"></i>
<span class="t" style="left:808.7px;top:190.05px;line-height:16px;font-size:10.21px;letter-spacing:0.59px;color:#222;">取消货件</span>
<i class="cb" style="left:239px;top:222px"></i>
<span class="t" style="left:257.7px;top:222.05px;line-height:16px;font-size:10.21px;letter-spacing:0.59px;color:#222;">编辑备注</span>
<i class="cb" style="left:347px;top:222px"></i>
<span class="t" style="left:365.7px;top:222.05px;line-height:16px;font-size:10.21px;letter-spacing:0.59px;color:#222;">导出</span>
<i class="cb" style="left:112px;top:255px"></i>
<span class="t" style="left:130.7px;top:256.05px;line-height:16px;font-size:10.21px;letter-spacing:0.59px;color:#222;"><span class="v">TikTok</span>备货单</span>
<i class="cb" style="left:239px;top:255px"></i>
<span class="t" style="left:257.7px;top:256.05px;line-height:16px;font-size:10.21px;letter-spacing:0.59px;color:#222;">查看</span>
<i class="cb" style="left:347px;top:255px"></i>
<span class="t" style="left:365.7px;top:256.05px;line-height:16px;font-size:10.21px;letter-spacing:0.59px;color:#222;">审核</span>
<i class="cb" style="left:455px;top:255px"></i>
<span class="t" style="left:473.7px;top:256.05px;line-height:16px;font-size:10.21px;letter-spacing:0.59px;color:#222;">打印</span>
<i class="cb" style="left:563px;top:255px"></i>
<span class="t" style="left:581.7px;top:256.05px;line-height:16px;font-size:10.21px;letter-spacing:0.59px;color:#222;">导出</span>
<i class="cb" style="left:671px;top:255px"></i>
<span class="t" style="left:689.7px;top:256.05px;line-height:16px;font-size:10.21px;letter-spacing:0.59px;color:#222;">同步数据</span>
<i class="cb" style="left:779px;top:255px"></i>
<span class="t" style="left:797.7px;top:256.05px;line-height:16px;font-size:10.21px;letter-spacing:0.59px;color:#222;">加入发货台</span>
<i class="cb" style="left:112px;top:288px"></i>
<span class="t" style="left:130.7px;top:289.05px;line-height:16px;font-size:10.21px;letter-spacing:0.59px;color:#222;"><span class="v">TikTok</span>发货台</span>
<i class="cb" style="left:239px;top:288px"></i>
<span class="t" style="left:257.7px;top:289.05px;line-height:16px;font-size:10.21px;letter-spacing:0.59px;color:#222;">查看</span>
<i class="cb" style="left:347px;top:288px"></i>
<span class="t" style="left:365.7px;top:289.05px;line-height:16px;font-size:10.21px;letter-spacing:0.59px;color:#222;">下物流单</span>
<i class="cb" style="left:455px;top:288px"></i>
<span class="t" style="left:473.7px;top:289.05px;line-height:16px;font-size:10.21px;letter-spacing:0.59px;color:#222;">查看送货单</span>
<i class="cb" style="left:563px;top:288px"></i>
<span class="t" style="left:581.7px;top:289.05px;line-height:16px;font-size:10.21px;letter-spacing:0.59px;color:#222;">打印</span>
<i class="cb" style="left:671px;top:288px"></i>
<span class="t" style="left:689.7px;top:289.05px;line-height:16px;font-size:10.21px;letter-spacing:0.59px;color:#222;">修改送货数量</span>
<i class="cb" style="left:779px;top:288px"></i>
<span class="t" style="left:797.7px;top:289.05px;line-height:16px;font-size:10.21px;letter-spacing:0.59px;color:#222;">重新下单</span>
<i class="cb" style="left:887px;top:288px"></i>
<span class="t" style="left:905.7px;top:289.05px;line-height:16px;font-size:10.21px;letter-spacing:0.59px;color:#222;">取消物流单</span>
<i class="cb" style="left:239px;top:321px"></i>
<span class="t" style="left:257.7px;top:322.05px;line-height:16px;font-size:10.21px;letter-spacing:0.59px;color:#222;">确认送货</span>
<i class="cb" style="left:347px;top:321px"></i>
<span class="t" style="left:365.7px;top:322.05px;line-height:16px;font-size:10.21px;letter-spacing:0.59px;color:#222;">同步</span>
<i class="cb" style="left:112px;top:354px"></i>
<span class="t" style="left:130.7px;top:355.05px;line-height:16px;font-size:10.21px;letter-spacing:0.59px;color:#222;"><span class="v">TikTok</span>送货管理</span>
<i class="cb" style="left:239px;top:354px"></i>
<span class="t" style="left:257.7px;top:355.05px;line-height:16px;font-size:10.21px;letter-spacing:0.59px;color:#222;">查看</span>
<i class="cb" style="left:347px;top:354px"></i>
<span class="t" style="left:365.7px;top:355.05px;line-height:16px;font-size:10.21px;letter-spacing:0.59px;color:#222;">查看送货单</span>
<i class="cb" style="left:455px;top:354px"></i>
<span class="t" style="left:473.7px;top:355.05px;line-height:16px;font-size:10.21px;letter-spacing:0.59px;color:#222;">打印</span>
<i class="cb" style="left:563px;top:354px"></i>
<span class="t" style="left:581.7px;top:355.05px;line-height:16px;font-size:10.21px;letter-spacing:0.59px;color:#222;">导出</span>
<i class="cb" style="left:671px;top:354px"></i>
<span class="t" style="left:689.7px;top:355.05px;line-height:16px;font-size:10.21px;letter-spacing:0.59px;color:#222;">生成多平台发货单</span>
<i class="cb" style="left:790px;top:354px"></i>
<span class="t" style="left:808.7px;top:355.05px;line-height:16px;font-size:10.21px;letter-spacing:0.59px;color:#222;">同步</span>
<i class="cb" style="left:112px;top:388px"></i>
<span class="t" style="left:130.7px;top:388.05px;line-height:16px;font-size:10.21px;letter-spacing:0.59px;color:#222;">多平台发货单</span>
<i class="cb" style="left:239px;top:388px"></i>
<span class="t" style="left:257.7px;top:388.05px;line-height:16px;font-size:10.21px;letter-spacing:0.59px;color:#222;">查看</span>
<i class="cb" style="left:347px;top:388px"></i>
<span class="t" style="left:365.7px;top:388.05px;line-height:16px;font-size:10.21px;letter-spacing:0.59px;color:#222;">编辑</span>
<i class="cb" style="left:455px;top:388px"></i>
<span class="t" style="left:473.7px;top:388.05px;line-height:16px;font-size:10.21px;letter-spacing:0.59px;color:#222;">打印</span>
<i class="cb" style="left:563px;top:388px"></i>
<span class="t" style="left:581.7px;top:388.05px;line-height:16px;font-size:10.21px;letter-spacing:0.59px;color:#222;">取消发货单</span>
<i class="cb" style="left:671px;top:388px"></i>
<span class="t" style="left:689.7px;top:388.05px;line-height:16px;font-size:10.21px;letter-spacing:0.59px;color:#222;">确认发货</span>
<i class="cb" style="left:779px;top:388px"></i>
<span class="t" style="left:797.7px;top:388.05px;line-height:16px;font-size:10.21px;letter-spacing:0.59px;color:#222;">删除</span>
<i class="cb" style="left:887px;top:388px"></i>
<span class="t" style="left:905.7px;top:388.05px;line-height:16px;font-size:10.21px;letter-spacing:0.59px;color:#222;">备注</span>
<i class="cb" style="left:239px;top:420px"></i>
<span class="t" style="left:257.7px;top:421.05px;line-height:16px;font-size:10.21px;letter-spacing:0.59px;color:#222;">导出</span>
<i class="cb" style="left:347px;top:420px"></i>
<span class="t" style="left:365.7px;top:421.05px;line-height:16px;font-size:10.21px;letter-spacing:0.59px;color:#222;">导入物流费用</span>
<i class="cb" style="left:119px;top:469px"></i>
<span class="t" style="left:137.7px;top:469.05px;line-height:16px;font-size:10.21px;letter-spacing:0.59px;color:#222;">全选</span>
<div style="position:absolute;left:1006.8px;top:235.2px;width:5px;height:58.4px;background:#dcdfe5;border-radius:3px"></div>
</div>
<span class="t" style="left:55.4px;top:194.00px;line-height:18px;font-size:11.91px;letter-spacing:0.69px;color:#444;">多平台</span>
<i class="cb" style="left:1000px;top:195px"></i>
<span class="t" style="left:1018.7px;top:195.05px;line-height:16px;font-size:10.21px;letter-spacing:0.59px;color:#222;">全选</span>
<div style="position:absolute;left:41px;top:218px;width:1012.6px;height:1px;background:#e6e8ec"></div>
<div style="position:absolute;left:0px;top:0px;width:1080px;height:40.9px;background:#fff;border-bottom:1px solid #dfe2e8;border-radius:2px 2px 0 0"></div>
<span class="t" style="left:18.2px;top:14.00px;line-height:16px;font-size:10.21px;letter-spacing:0.59px;color:#333;">添加角色</span>
<svg class="abs" style="left:1049.4px;top:19px" width="10" height="10" viewBox="0 0 10 10"><path d="M0.8 0.8 L9.2 9.2 M9.2 0.8 L0.8 9.2" stroke="#444" stroke-width="1"/></svg>
<div style="position:absolute;left:1073px;top:332.3px;width:6px;height:371.4px;background:#dddee4;border-radius:3px"></div>
<div style="position:absolute;left:0px;top:704px;width:1080px;height:43.5px;background:#fff"></div>
<div style="position:absolute;left:948.1px;top:712.4px;width:50.4px;height:28px;background:#fff;border:1px solid #d9d9d9;border-radius:3px"></div>
<span class="t" style="left:962.6px;top:719.20px;line-height:16px;font-size:10.21px;letter-spacing:0.59px;color:#333;">取消</span>
<div style="position:absolute;left:1010.9px;top:712.4px;width:50.7px;height:28px;background:#0a84ff;border-radius:3px"></div>
<span class="t" style="left:1025.6px;top:719.20px;line-height:16px;font-size:10.21px;letter-spacing:0.59px;color:#fff;font-weight:700;">保存</span>
</div>
<div class="abs" style="left:1840px;top:2px;width:51px;height:36.5px;background:#45403c"></div>
<div class="abs" style="left:1840px;top:2px;width:14px;height:19px;background:#211a14"></div>
<div class="abs" style="left:1840px;top:21px;width:14px;height:17.5px;background:#3d3834"></div>
<div class="abs" style="left:1854px;top:2px;width:18px;height:36.5px;background:#48433f"></div>
<div class="abs" style="left:1872px;top:2px;width:19px;height:19px;background:#49423b"></div>
<div class="abs" style="left:1840px;top:2px;width:51px;height:1.2px;background:#d8d8d8"></div>
<div class="abs" style="left:1893px;top:16.2px;border:3.8px solid transparent;border-top:4.6px solid #b3aeaa;border-bottom:none"></div>
<svg class="abs" style="left:0;top:0" width="1920" height="948" viewBox="0 0 1920 948">
<polygon fill="#ea4a3d" points="773.0,19.9 460.5,37.7 260.8,49.0 174.5,54.2 175.9,57.4 162.8,50.4 175.1,42.1 174.1,45.4 260.5,41.8 460.3,32.9 773.0,19.1"/>
<polygon fill="#ea4a3d" points="144.9,66.7 448.5,95.7 881.4,138.3 1121.2,161.7 1601.0,208.6 1700.5,218.1 1780.9,225.8 1779.9,222.2 1793.3,231.4 1778.4,237.8 1780.0,234.4 1699.7,226.1 1600.2,215.8 1120.7,167.2 880.9,142.8 448.1,99.1 144.7,67.7"/>
<rect x="796.60" y="0.20" width="59.80" height="41.20" rx="3.2" ry="3.2" fill="none" stroke="#ea4a3d" stroke-width="4.8"/>
<rect x="53.00" y="28.40" width="74.60" height="41.10" rx="3" ry="3" fill="none" stroke="#ea4a3d" stroke-width="4.4"/>
<rect x="1833.85" y="204.55" width="46.90" height="46.60" rx="3.2" ry="3.2" fill="none" stroke="#ea4a3d" stroke-width="4.5"/>
<rect x="452.35" y="292.35" width="98.30" height="41.20" rx="2.8" ry="2.8" fill="none" stroke="#ea4a3d" stroke-width="4.3"/>
<rect x="461.40" y="509.40" width="92.10" height="35.70" rx="2.8" ry="2.8" fill="none" stroke="#ea4a3d" stroke-width="4.2"/>
<rect x="555.15" y="610.45" width="890.90" height="64.70" rx="2.8" ry="2.8" fill="none" stroke="#ea4a3d" stroke-width="3.7"/>
</svg>
</body></html>
